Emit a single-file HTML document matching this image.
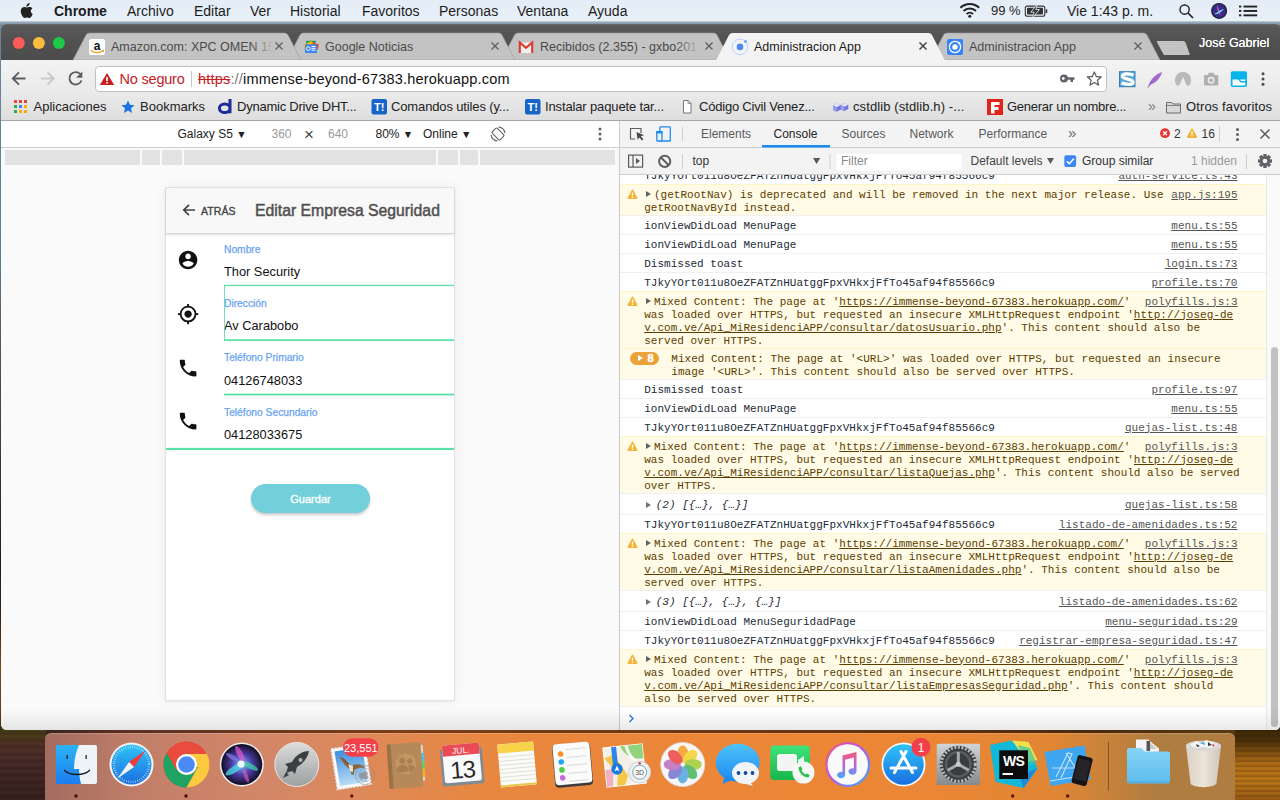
<!DOCTYPE html>
<html><head><meta charset="utf-8"><title>Administracion App</title>
<style>
*{box-sizing:border-box;margin:0;padding:0}
html,body{width:1280px;height:800px;overflow:hidden;background:#3a2418;font-family:"Liberation Sans",sans-serif;-webkit-font-smoothing:antialiased}
.abs{position:absolute}
#root{position:relative;width:1280px;height:800px;overflow:hidden}
/* desktop */
#desk{left:0;top:0;width:1280px;height:800px;background:linear-gradient(90deg,#3a2a20 0,#38241f 46px,#5a3020 120px,#7a3e18 400px,#6a3410 800px,#4a2a0c 1100px,#5a3a10 1235px,#6a4210 1250px,#8a5212 1265px,#5a3a0e 1280px)}
/* menubar */
#menubar{left:0;top:0;width:1280px;height:22px;background:linear-gradient(#e4edf7,#e8f0f8);border-bottom:1px solid #b9c3cc;font-size:14px;color:#1c1c1c;line-height:22px}
#menubar span{position:absolute;top:0;white-space:nowrap}
/* chrome window */
#win{left:1px;top:24px;width:1279px;height:705.500px;background:#fff;border-radius:5px 4px 5px 6px;overflow:hidden}
#winin{left:-1px;top:-24px;width:1280px;height:800px}
#titlebar{left:0;top:24px;width:1280px;height:36px;background:linear-gradient(#6a6a6a,#595959 2px,#535353 12px,#4c4c4c)}
#titlebar span{position:absolute;white-space:nowrap;font-size:12.5px;line-height:16px;top:15px;color:#4a4a4a}
#toolbar{left:0;top:60px;width:1280px;height:35px;background:linear-gradient(#f3f3f3,#e9e9e9)}
#bmbar{left:0;top:95px;width:1280px;height:25px;background:linear-gradient(#e9e9e9,#dedede);font-size:13px;color:#222}
#bmbar span{position:absolute;top:4px;white-space:nowrap;line-height:16px}

/* left pane */
#left{left:0;top:120px;width:619px;height:610px;background:#fafafa}
#devbar{left:0;top:0;width:619px;height:28px;background:#fff;border-bottom:1px solid #cfcfcf;font-size:12px;color:#222}
#devbar span{position:absolute;top:7px;line-height:15px;white-space:nowrap}
#mq i{position:absolute;top:30px;height:15px;background:#e3e3e3}
#phone{left:166px;top:68px;width:288px;height:512px;background:#fff;box-shadow:0 0 0 1px #e2e2e2,0 1px 3px rgba(0,0,0,.1),0 0 14px rgba(0,0,0,.06)}
#aphead{left:0;top:0;width:288px;height:46px;background:#f8f8f8;border-bottom:1px solid #d6d6d6;box-shadow:0 1px 2px rgba(0,0,0,.12)}
#phone .lb{position:absolute;left:58px;font-size:10.250px;line-height:12px;color:#6aa3f3;white-space:nowrap;-webkit-text-stroke:.25px #6aa3f3}
#phone .vl{position:absolute;left:58px;font-size:12.800px;line-height:16px;color:#111;white-space:nowrap}
#phone .gl{position:absolute;height:1.500px;background:#4fdc9c}
/* devtools */
#dt{left:619px;top:120px;width:661px;height:610px;background:#fff;border-left:1px solid #cbcbcb}
#dttabs{left:0;top:0;width:660px;height:28px;background:#f3f3f3;border-bottom:1px solid #cdcdcd;font-size:12px;color:#5a5a5a}
#dttabs span,#ctb span{position:absolute;top:6.500px;line-height:15px;white-space:nowrap}
#ctb{left:0;top:28px;width:660px;height:27px;z-index:2;background:#f3f3f3;border-bottom:1px solid #cdcdcd;font-size:12px;color:#333}
#cons{left:0;top:54px;width:646px;height:554px;overflow:hidden;font-family:"Liberation Mono",monospace;font-size:11px;line-height:13px;color:#222a35;letter-spacing:.016px}
#cons .r{position:absolute;left:0;width:646px;border-top:1px solid #f0f0f0;white-space:pre}
#cons .w{background:#fffbe6;border-top:1px solid #fff5c4;color:#5c3c00}
#cons .t{position:absolute;left:24px;top:2px}
#cons .k{position:absolute;right:28.500px;top:2px;text-decoration:underline;color:#545454}
#cons u{text-decoration:underline}
#cons .ar{display:inline-block;width:0;height:0;border-left:5.200px solid #636363;border-top:3.500px solid transparent;border-bottom:3.500px solid transparent;margin:2.500px 3.300px 0 1.500px;vertical-align:top}
</style></head><body><div id="root">
<div id="desk" class="abs"></div>
<div class="abs" style="left:0;top:726px;width:46px;height:74px;background:repeating-linear-gradient(180deg,rgba(0,0,0,.22) 0,rgba(0,0,0,0) 3px,rgba(0,0,0,.15) 7px),linear-gradient(180deg,#4a4216 0,#4e3a1c 10px,#52302a 22px,#432826 45px,#38221f 74px)"></div>
<div class="abs" style="left:1235px;top:726px;width:45px;height:74px;background:repeating-linear-gradient(180deg,rgba(40,20,0,.35) 0,rgba(0,0,0,0) 2px,rgba(40,20,0,.25) 5px),linear-gradient(180deg,#3a2808 0,#4a300a 14px,#7a4c10 24px,#b87418 38px,#c47c1a 55px,#9c5e14 74px)"></div>
<div class="abs" style="left:0;top:22px;width:2px;height:710px;background:linear-gradient(180deg,#6f8599 0,#5f7f95 230px,#555a68 310px,#3e3840 430px,#2a1c14 540px,#3a2414 600px,#7a4a18 645px,#6a4216 680px,#3a3010 710px)"></div>
<div id="menubar" class="abs">
<svg class="abs" style="left:20px;top:3px" width="14" height="16" viewBox="0 0 14 16"><path fill="#222" d="M9.6 0c.1 1-.3 1.900-.9 2.600-.6.700-1.500 1.200-2.400 1.100-.1-.9.400-1.900.9-2.500C7.800.5 8.800.1 9.600 0zM12.400 5.400c-1 .6-1.600 1.500-1.600 2.700 0 1.300.8 2.400 1.900 2.800-.3.900-.7 1.700-1.300 2.500-.6.800-1.200 1.600-2.100 1.600-.9 0-1.200-.6-2.300-.6s-1.400.6-2.300.6c-.9 0-1.600-.8-2.200-1.700C1.200 11.500.4 9 .9 7c.4-1.700 1.800-3 3.400-3 .9 0 1.800.6 2.400.6.600 0 1.600-.7 2.800-.6 1.100 0 2.200.5 2.900 1.400z"/></svg>
<span style="left:54px;font-weight:bold">Chrome</span>
<span style="left:127px">Archivo</span>
<span style="left:194px">Editar</span>
<span style="left:250px">Ver</span>
<span style="left:290px">Historial</span>
<span style="left:362px">Favoritos</span>
<span style="left:439px">Personas</span>
<span style="left:517px">Ventana</span>
<span style="left:588px">Ayuda</span>
<svg class="abs" style="left:950px;top:0" width="330" height="22" viewBox="950 0 330 22">
<g fill="none" stroke="#222" stroke-width="2.100" stroke-linecap="butt"><path d="M960.400 7.800a13.500 13.500 0 0 1 18.800 0"/><path d="M963.600 11a9 9 0 0 1 12.400 0"/><path d="M966.600 14a4.700 4.700 0 0 1 6.400 0"/></g><circle cx="969.800" cy="16.300" r="1.500" fill="#222"/>
<rect x="1025.300" y="6.100" width="19.500" height="10.200" rx="2" fill="none" stroke="#333" stroke-width="1.100"/><rect x="1045.700" y="9.200" width="1.600" height="4" rx=".8" fill="#333"/><rect x="1027" y="7.800" width="16" height="6.800" rx=".8" fill="#333"/><path d="M1036.800 5.500l-5.300 6.300h3.200l-1.700 4.700 5.600-6.500h-3.300z" fill="#e7eef5" stroke="#e7eef5" stroke-width="1.400"/><path d="M1036.800 5.500l-5.300 6.300h3.200l-1.700 4.700 5.600-6.500h-3.300z" fill="#333"/>
<circle cx="1184.600" cy="9.600" r="4.600" fill="none" stroke="#222" stroke-width="1.400"/><path d="M1188 13l5 5" stroke="#222" stroke-width="1.700"/>
<circle cx="1219.100" cy="10.900" r="8" fill="#1a1a2a"/><circle cx="1219.100" cy="10.900" r="6.800" fill="#3a2a8a"/><path d="M1214 14c3-1 7-5 10-5-2 2-5 6-10 5z" fill="#5ee0e8"/><path d="M1217 5c1.500 3 3 8 3.500 11-2-3-3.500-7-3.500-11z" fill="#f070c0"/>
<g fill="#222"><rect x="1243.500" y="5.600" width="13.700" height="1.900"/><rect x="1243.500" y="10" width="13.700" height="1.900"/><rect x="1243.500" y="14.400" width="13.700" height="1.900"/><rect x="1239" y="5.600" width="2.300" height="1.900"/><rect x="1239" y="10" width="2.300" height="1.900"/><rect x="1239" y="14.400" width="2.300" height="1.900"/></g>
</svg>
<span style="left:991px;font-size:13px">99 %</span>
<span style="left:1067px">Vie 1:43 p. m.</span>
</div>
<div class="abs" style="left:0;top:22px;width:1280px;height:3px;background:linear-gradient(#9fb0bf,#6f8599)"></div>
<div id="win" class="abs"><div id="winin" class="abs">
<div id="titlebar" class="abs">
<svg class="abs" style="left:0;top:0" width="1280" height="36" viewBox="0 24 1280 36">
<circle cx="18.800" cy="43" r="6" fill="#fc5b57"/><circle cx="38.900" cy="43" r="6" fill="#fdbc40"/><circle cx="58.900" cy="43" r="6" fill="#1dc84a"/>
<g fill="#c3c3c3" stroke="#9b9b9b" stroke-width="0.600">
<path d="M930.500 60 L943.500 35 Q944.500 33 947 33 L1143.500 33 Q1146 33 1147 35 L1160 60Z"/>
<path d="M501.500 60 L514.500 35 Q515.500 33 518 33 L713.500 33 Q716 33 717 35 L730 60Z"/>
<path d="M287 60 L300 35 Q301 33 303.500 33 L498.500 33 Q501 33 502 35 L515 60Z"/>
<path d="M73 60 L86 35 Q87 33 89.500 33 L284.500 33 Q287 33 288 35 L301 60Z"/>
<path d="M1157.500 41 L1183.500 41 Q1185 41 1185.500 42.500 L1189.500 53.500 Q1190 55 1188.500 55 L1165 55 Q1163.500 55 1163 53.500 L1157 42.200 Q1156.500 41 1157.500 41Z" stroke="none"/>
</g>
<path d="M716 60.500 L729 35 Q730 33 732.500 33 L928.500 33 Q931 33 932 35 L945 60.500Z" fill="#f3f3f3"/>
<g stroke="#5f5f5f" stroke-width="1.300" fill="none">
<path d="M275.500 42.500l7 7m0-7l-7 7"/><path d="M491.500 42.500l7 7m0-7l-7 7"/><path d="M705.500 42.500l7 7m0-7l-7 7"/><path d="M1134.500 42.500l7 7m0-7l-7 7"/>
</g>
<path d="M919.500 42.500l7 7m0-7l-7 7" stroke="#3c3c3c" stroke-width="1.400" fill="none"/>
<!-- favicons -->
<rect x="89" y="39" width="16" height="16" rx="2.500" fill="#fff"/><text x="97" y="49.500" font-family="Liberation Sans" font-weight="bold" font-size="12" text-anchor="middle" fill="#111">a</text><path d="M90.500 50.500c4 2.600 9 2.600 13 0" fill="none" stroke="#f5a01a" stroke-width="1.300"/><path d="M103.800 49.300l.3 2.700-2.300-.6z" fill="#f5a01a"/>
<rect x="306" y="40.800" width="10" height="3" rx=".8" fill="#1ea35a"/><path d="M303.600 44.500l3-1 4.500-2.500 4.500 2.500 3.200 .7-.7 5h-13.800z" fill="#fbbc05"/><path d="M311 41l4.500 2.500 3.300.7-.8 5-2-.5z" fill="#ea4335"/><rect x="305" y="44.200" width="12" height="8.800" rx=".8" fill="#3b82f4"/><circle cx="308.300" cy="48.600" r="1.900" fill="none" stroke="#fff" stroke-width="1"/><rect x="311.500" y="46" width="4" height="1" fill="#fff"/><rect x="311.500" y="47.800" width="4" height="1" fill="#fff"/><rect x="311.500" y="49.700" width="4" height="1" fill="#fff"/>
<rect x="519.800" y="42.500" width="12.400" height="10.500" fill="#f2f0ee"/><path d="M519.800 53V42.500l6.200 5.300 6.200-5.300V53" fill="none" stroke="#df3b2c" stroke-width="2.100"/>
<circle cx="740" cy="46.900" r="7.800" fill="none" stroke="#b4ccfa" stroke-width=".9"/><circle cx="740" cy="46.900" r="3.300" fill="#4a8af4"/><circle cx="745.500" cy="41.400" r="1.500" fill="#6aa8f8"/>
<rect x="947" y="39" width="16" height="16" rx="2.200" fill="#3585f8"/><circle cx="955" cy="47" r="5.600" fill="none" stroke="#fff" stroke-width="1.300"/><circle cx="955" cy="47" r="2.700" fill="#fff"/><circle cx="959.200" cy="43.200" r="1.100" fill="#fff"/>
</svg>
<span style="left:111px;width:163px;overflow:hidden">Amazon.com: XPC OMEN 15</span>
<i class="abs" style="left:250px;top:12px;width:24px;height:22px;background:linear-gradient(90deg,rgba(195,195,195,0),#c3c3c3)"></i>
<span style="left:325px">Google Noticias</span>
<span style="left:540px;width:157px;overflow:hidden">Recibidos (2.355) - gxbo201</span>
<i class="abs" style="left:675px;top:12px;width:25px;height:22px;background:linear-gradient(90deg,rgba(195,195,195,0),#c3c3c3)"></i>
<span style="left:754px;color:#1a1a1a">Administracion App</span>
<span style="left:969px">Administracion App</span>
<span style="left:1199px;color:#fff;top:11px;font-size:12.5px;text-shadow:0 0 .5px #fff">José Gabriel</span>
</div>
<div id="toolbar" class="abs">
<svg class="abs" style="left:0;top:0" width="1280" height="35" viewBox="0 60 1280 35">
<g fill="none" stroke="#5a5d61" stroke-width="1.900" stroke-linecap="butt" stroke-linejoin="miter">
<path d="M25.500 78.500H13.200M19 72.300l-6.200 6.200 6.200 6.200"/>
<path d="M41 78.500h12.300M47.500 72.300l6.200 6.200-6.200 6.200" stroke="#c9c9c9"/>
<path d="M80.300 74.200A6.200 6.200 0 1 0 81.500 80.500"/>
</g>
<path d="M82.300 71.500v6.200h-6.200z" fill="#5a5d61"/>
<rect x="95.500" y="66.500" width="1011" height="25" rx="3.500" fill="#fff" stroke="#bfbfbf"/>
<path d="M107 73l7.200 12h-14.400z" fill="#c5221f"/><rect x="106.200" y="77" width="1.600" height="4" fill="#fff"/><rect x="106.200" y="82" width="1.600" height="1.600" fill="#fff"/>
<rect x="191" y="71" width="1" height="16" fill="#c8c8c8"/>
<!-- key -->
<g fill="#5f6368"><circle cx="1064" cy="78.500" r="4"/><rect x="1066" y="77.300" width="8.500" height="2.400"/><rect x="1070.500" y="78" width="2.500" height="4"/></g><circle cx="1063.300" cy="78.500" r="1.400" fill="#fff"/>
<!-- star -->
<path d="M1094.300 72l2 4.500 4.900.5-3.700 3.300 1.100 4.800-4.300-2.600-4.300 2.600 1.100-4.800-3.700-3.300 4.900-.5z" fill="none" stroke="#5f6368" stroke-width="1.300" stroke-linejoin="round"/>
<!-- ext icons -->
<rect x="1119.500" y="71.700" width="15.500" height="15" fill="#58a6d6" stroke="#2f80b6" stroke-width="1"/><path d="M1133.500 75.300c-3.500-2-11-2-11 .9 0 3.300 10.600 2.500 10.600 6 0 3-8 2.600-11.600 .6" fill="none" stroke="#fff" stroke-width="3.300"/>
<path d="M1148.500 86.500c1-5 5-11.500 13.500-14.500-1.500 6-6 11-11.500 12.500z" fill="#a46ad0"/><path d="M1148 87.500l4-6" stroke="#8a4fc0" stroke-width="1"/>
<path d="M1176.600 85.600C1173 80 1175.500 72 1183 72s10 8 6.400 13.600l-2.700-.1L1183 76.800l-3.700 8.700z" fill="#b9b9b9"/>
<g fill="#b0b0b0"><rect x="1204" y="75" width="14.300" height="10.500" rx="1.200"/><rect x="1208.200" y="72.800" width="6" height="3" rx="1"/></g><circle cx="1211.100" cy="80.200" r="3.400" fill="#efefef"/><circle cx="1211.100" cy="80.200" r="1.900" fill="#b0b0b0"/>
<rect x="1230.800" y="71.300" width="16.200" height="15.800" rx="1.800" fill="#08b4ea"/><path d="M1232.500 79.500h5.300c1.500 0 1.500 3 3.200 3h4.300v3h-12.800zM1240 79.500h5.300v1.600H1241z" fill="#fff"/>
<g fill="#4a4a4a"><circle cx="1263" cy="73.800" r="1.500"/><circle cx="1263" cy="79" r="1.500"/><circle cx="1263" cy="84.200" r="1.500"/></g>
</svg>
<span class="abs" style="left:119.500px;top:10.500px;font-size:14.500px;line-height:17px;color:#c5221f;white-space:nowrap;letter-spacing:-.2px">No seguro</span>
<span class="abs" style="left:198px;top:10.500px;font-size:14.500px;line-height:17px;color:#111;white-space:nowrap;letter-spacing:.185px"><span style="color:#c5221f;text-decoration:line-through">https</span><span style="color:#777">://</span>immense-beyond-67383.herokuapp.com</span>
</div>
<div id="bmbar" class="abs">
<svg class="abs" style="left:0;top:0" width="1280" height="24" viewBox="0 95 1280 24">
<g><rect x="14" y="100" width="3" height="3" fill="#e8453c"/><rect x="19" y="100" width="3" height="3" fill="#e8453c"/><rect x="24" y="100" width="3" height="3" fill="#e8453c"/>
<rect x="14" y="105" width="3" height="3" fill="#34a853"/><rect x="19" y="105" width="3" height="3" fill="#4285f4"/><rect x="24" y="105" width="3" height="3" fill="#f9ab00"/>
<rect x="14" y="110" width="3" height="3" fill="#34a853"/><rect x="19" y="110" width="3" height="3" fill="#f9ab00"/><rect x="24" y="110" width="3" height="3" fill="#f9ab00"/></g>
<path d="M128 100.500l1.900 4.300 4.600.4-3.500 3.100 1.100 4.600-4.100-2.500-4.100 2.500 1.100-4.600-3.500-3.100 4.600-.4z" fill="#1a73e8"/>
<path d="M230 99v14.300M230 108.300a5.300 4.300 0 1 1-10.600 0a5.300 4.300 0 1 1 10.600 0z" fill="none" stroke="#1e2a9a" stroke-width="3"/>
<rect x="371.500" y="99" width="15.500" height="15.500" rx="2" fill="#1565c8"/><text x="379.200" y="111" font-family="Liberation Sans" font-weight="bold" font-size="11" fill="#fff" text-anchor="middle">T!</text>
<rect x="525" y="99" width="15.500" height="15.500" rx="2" fill="#1565c8"/><text x="532.700" y="111" font-family="Liberation Sans" font-weight="bold" font-size="11" fill="#fff" text-anchor="middle">T!</text>
<path d="M683.500 100.500h4.500l3 3v9.500h-7.500z" fill="#fff" stroke="#777" stroke-width="1"/><path d="M688 100.500v3h3" fill="none" stroke="#777" stroke-width=".8"/>
<g><path d="M833 105.500l4-2 3.500 1.500 4-2 3.800 1.700v4.300l-4 2-3.600-1.500-4 2.200-3.700-1.800z" fill="#7474dc"/><path d="M833 105.500l4-2 3.500 1.500 4-2 3.800 1.700-4 2-3.600-1.600-4 2.100z" fill="#e6e6fb"/><path d="M836.700 107.300v4.400l-3.700-1.800v-4.400zM844.300 106.700v4.300l-3.600-1.500v-4.400z" fill="#9c9cec"/></g>
<rect x="987" y="99" width="16" height="16" fill="#e2231a"/><path d="M991 102h8.500v3H994.500v2h4v3h-4v3.500H991z" fill="#fff"/>
<path d="M1166.500 102.500h5l1.500 1.500h7.500v9h-14z" fill="#d8d8d8" stroke="#6b6b6b" stroke-width="1"/><path d="M1166.500 105.500h14" stroke="#6b6b6b" stroke-width=".8"/>
</svg>
<span style="left:33.500px">Aplicaciones</span>
<span style="left:140px">Bookmarks</span>
<span style="left:237px;letter-spacing:-0.240px">Dynamic Drive DHT...</span>
<span style="left:391px;letter-spacing:-0.138px">Comandos utiles (y...</span>
<span style="left:545px;letter-spacing:-0.135px">Instalar paquete tar...</span>
<span style="left:699px;letter-spacing:-0.205px">Código Civil Venez...</span>
<span style="left:853px;letter-spacing:0.100px">cstdlib (stdlib.h) -...</span>
<span style="left:1007px;letter-spacing:-0.255px">Generar un nombre...</span>
<span style="left:1148px;color:#777;font-size:14px;top:3px">»</span>
<span style="left:1186px;letter-spacing:0.113px">Otros favoritos</span>
</div>
<div class="abs" style="left:0;top:120px;width:1280px;height:1px;background:#a6a6a6;z-index:3"></div>
<div id="left" class="abs">
<div id="devbar" class="abs">
<span style="left:177.500px">Galaxy S5 <b style="font-size:10.500px;font-weight:normal">▼</b></span>
<span style="left:271.500px;color:#9a9a9a">360</span>
<span style="left:304px;color:#444;font-size:17px;top:6.500px">×</span>
<span style="left:328px;color:#9a9a9a">640</span>
<span style="left:375.500px">80% <b style="font-size:10.500px;font-weight:normal">▼</b></span>
<span style="left:423px">Online <b style="font-size:10.500px;font-weight:normal">▼</b></span>
<svg class="abs" style="left:488px;top:4px" width="20" height="20" viewBox="-10 -10 20 20"><g fill="none" stroke="#666" stroke-width="1.150"><rect x="-5.600" y="-3.500" width="11.200" height="7" rx="1.200" transform="rotate(45)"/><path d="M.6 -6.900A7 7 0 0 1 6.900 -.9M-.6 6.900A7 7 0 0 1 -6.900 .9"/></g></svg>
<svg class="abs" style="left:598px;top:6px" width="4" height="16" viewBox="0 0 4 16"><g fill="#5f6368"><circle cx="2" cy="3" r="1.500"/><circle cx="2" cy="8" r="1.500"/><circle cx="2" cy="13" r="1.500"/></g></svg>
</div>
<div id="mq"><i style="left:5px;width:135px"></i><i style="left:142px;width:17.500px"></i><i style="left:161.500px;width:20.500px"></i><i style="left:184px;width:252px"></i><i style="left:438px;width:20px"></i><i style="left:459.500px;width:18.500px"></i><i style="left:480px;width:135px"></i></div>
<div id="phone" class="abs">
<div id="aphead" class="abs">
<svg class="abs" style="left:16px;top:15px" width="14" height="14" viewBox="0 0 14 14"><path d="M13 7H2.500M7 1.800L1.800 7 7 12.200" fill="none" stroke="#424242" stroke-width="1.700"/></svg>
<span class="abs" style="left:35px;top:16.500px;font-size:10.500px;line-height:13px;color:#424242;letter-spacing:.1px;-webkit-text-stroke:.35px #424242">ATRÁS</span>
<span class="abs" style="left:89px;top:13px;font-size:15.770px;line-height:20px;color:#505050;white-space:nowrap;-webkit-text-stroke:.45px #505050">Editar Empresa Seguridad</span>
</div>
<!-- icons -->
<svg class="abs" style="left:10.900px;top:60.9px" width="22.200" height="22.200" viewBox="0 0 24 24"><path fill="#111" d="M12 2C6.480 2 2 6.480 2 12s4.480 10 10 10 10-4.480 10-10S17.520 2 12 2zm0 3c1.660 0 3 1.340 3 3s-1.340 3-3 3-3-1.340-3-3 1.340-3 3-3zm0 14.200c-2.500 0-4.710-1.280-6-3.220.030-1.990 4-3.080 6-3.080 1.990 0 5.970 1.090 6 3.080-1.290 1.940-3.500 3.220-6 3.220z"/></svg>
<svg class="abs" style="left:10.900px;top:114.9px" width="22.200" height="22.200" viewBox="0 0 24 24"><path fill="#111" d="M12 8c-2.210 0-4 1.790-4 4s1.790 4 4 4 4-1.790 4-4-1.790-4-4-4zm8.940 3A8.994 8.994 0 0 0 13 3.060V1h-2v2.060A8.994 8.994 0 0 0 3.060 11H1v2h2.060A8.994 8.994 0 0 0 11 20.940V23h2v-2.060A8.994 8.994 0 0 0 20.940 13H23v-2h-2.060zM12 19c-3.870 0-7-3.130-7-7s3.130-7 7-7 7 3.130 7 7-3.130 7-7 7z"/></svg>
<svg class="abs" style="left:10.900px;top:168.9px" width="22.200" height="22.200" viewBox="0 0 24 24"><path fill="#111" d="M6.620 10.790c1.440 2.830 3.760 5.140 6.590 6.590l2.200-2.200c.27-.27.670-.36 1.020-.24 1.120.37 2.330.57 3.570.57.550 0 1 .45 1 1V20c0 .55-.45 1-1 1-9.390 0-17-7.610-17-17 0-.55.450-1 1-1h3.500c.55 0 1 .45 1 1 0 1.250.2 2.450.57 3.570.11.350.03.740-.25 1.020l-2.200 2.200z"/></svg>
<svg class="abs" style="left:10.900px;top:221.9px" width="22.200" height="22.200" viewBox="0 0 24 24"><path fill="#111" d="M6.620 10.790c1.440 2.830 3.760 5.140 6.590 6.590l2.200-2.200c.27-.27.670-.36 1.020-.24 1.120.37 2.330.57 3.570.57.550 0 1 .45 1 1V20c0 .55-.45 1-1 1-9.390 0-17-7.610-17-17 0-.55.450-1 1-1h3.500c.55 0 1 .45 1 1 0 1.250.2 2.450.57 3.570.11.350.03.740-.25 1.020l-2.200 2.200z"/></svg>
<span class="lb" style="top:55.500px">Nombre</span><span class="vl" style="top:75.500px">Thor Security</span><i class="gl" style="left:58px;width:230px;top:96px;height:3px;background:linear-gradient(180deg,rgba(79,222,158,0.25) 0px,rgba(79,222,158,0.25) 1px,rgba(79,222,158,0.85) 1px,rgba(79,222,158,0.85) 2px,rgba(79,222,158,0.12) 2px,rgba(79,222,158,0.12) 3px)"></i>
<span class="lb" style="top:110px">Dirección</span><span class="vl" style="top:130px">Av Carabobo</span><i class="gl" style="left:58px;width:230px;top:151px;height:3px;background:linear-gradient(180deg,rgba(79,222,158,0.70) 0px,rgba(79,222,158,0.70) 1px,rgba(79,222,158,0.90) 1px,rgba(79,222,158,0.90) 2px,rgba(79,222,158,0.06) 2px,rgba(79,222,158,0.06) 3px)"></i><i class="gl" style="left:57.800px;width:1px;top:97px;height:55px;opacity:.8"></i>
<span class="lb" style="top:164px">Teléfono Primario</span><span class="vl" style="top:184.500px">04126748033</span><i class="gl" style="left:58px;width:230px;top:205px;height:3px;background:linear-gradient(180deg,rgba(79,222,158,0.30) 0px,rgba(79,222,158,0.30) 1px,rgba(79,222,158,1.00) 1px,rgba(79,222,158,1.00) 2px,rgba(79,222,158,0.40) 2px,rgba(79,222,158,0.40) 3px)"></i>
<span class="lb" style="top:218.500px">Teléfono Secundario</span><span class="vl" style="top:238.500px">04128033675</span><i class="gl" style="left:0;width:288px;top:259px;height:3px;background:linear-gradient(180deg,rgba(79,222,158,0.12) 0px,rgba(79,222,158,0.12) 1px,rgba(79,222,158,0.95) 1px,rgba(79,222,158,0.95) 2px,rgba(79,222,158,0.95) 2px,rgba(79,222,158,0.95) 3px)"></i>
<div class="abs" style="left:85px;top:296px;width:119px;height:29px;border-radius:15px;background:#72d0db;box-shadow:0 2px 3px rgba(0,0,0,.22);color:#fff;font-size:11px;line-height:31px;text-align:center;-webkit-text-stroke:.35px #fff">Guardar</div>
</div>
</div>
<div id="dt" class="abs">
<div id="dttabs" class="abs">
<svg class="abs" style="left:0;top:0" width="660" height="28" viewBox="620 120 660 28">
<g fill="none" stroke="#5f5f5f" stroke-width="1.200"><path d="M641 133v-4.500h-10.500v10.500h4.500" /></g><path d="M636.500 132l7.500 3.200-3.200 1.100 2.600 3-1.500 1.200-2.500-3.100-1.800 2.400z" fill="#4a4a4a"/>
<g fill="#f3f3f3" stroke="#1a8cf0" stroke-width="1.300"><rect x="659.900" y="126.900" width="10.400" height="14.100" rx=".8"/><rect x="656.800" y="131.700" width="5.200" height="9.300" rx=".8"/></g><rect x="656.200" y="131.100" width="6.400" height="2.400" fill="#1a8cf0"/>
<rect x="682" y="127" width="1" height="14" fill="#cfcfcf"/>
<rect x="762" y="145" width="68" height="2.500" fill="#1a8cf0"/>
<circle cx="1165" cy="133.200" r="4.900" fill="#e8332c"/><path d="M1163 131.200l4 4m0-4l-4 4" stroke="#fff" stroke-width="1.300"/>
<path d="M1192 129.200l4.300 8h-8.600z" fill="#f2b53a" stroke="#f2b53a" stroke-width="1.600" stroke-linejoin="round"/><rect x="1191.400" y="131.200" width="1.200" height="3.500" fill="#fff"/><rect x="1191.400" y="135.400" width="1.200" height="1.200" fill="#fff"/>
<rect x="1219" y="126" width="1" height="16" fill="#cfcfcf"/>
<g fill="#5f6368"><circle cx="1237.500" cy="129.500" r="1.500"/><circle cx="1237.500" cy="134.500" r="1.500"/><circle cx="1237.500" cy="139.500" r="1.500"/></g>
<path d="M1260.500 129.500l9 9m0-9l-9 9" stroke="#5a5a5a" stroke-width="1.500" fill="none"/>
</svg>
<span style="left:81px">Elements</span>
<span style="left:153.500px;color:#222">Console</span>
<span style="left:221.500px">Sources</span>
<span style="left:289.500px">Network</span>
<span style="left:358.500px">Performance</span>
<span style="left:448px;font-size:15px;top:4.500px;color:#666">»</span>
<span style="left:554px;color:#333">2</span>
<span style="left:581.500px;color:#333">16</span>
</div>
<div id="ctb" class="abs">
<svg class="abs" style="left:0;top:0" width="660" height="26" viewBox="620 148 660 26">
<g fill="none" stroke="#5a5a5a" stroke-width="1.200"><rect x="628.600" y="155.100" width="14" height="12" /><path d="M633 155v12"/></g><path d="M636 158l4 3-4 3z" fill="#5a5a5a"/>
<circle cx="664.700" cy="161.300" r="5.600" fill="none" stroke="#5e5e5e" stroke-width="2"/><path d="M660.700 157.300l8 8" stroke="#5e5e5e" stroke-width="2"/>
<rect x="682" y="154" width="1" height="15" fill="#cfcfcf"/>
<path d="M813 158h7.200l-3.600 6z" fill="#5a5a5a"/>
<rect x="829.500" y="154" width="1" height="15" fill="#cfcfcf"/>
<rect x="836.500" y="154" width="125" height="16.500" fill="#fff"/>
<path d="M1047 158h7l-3.500 6z" fill="#5a5a5a"/>
<rect x="1064.300" y="155.200" width="11.800" height="11.800" rx="2" fill="#3b86f2"/><path d="M1066.800 161.200l2.500 2.500 4.500-5" fill="none" stroke="#fff" stroke-width="1.600"/>
<rect x="1246" y="154" width="1" height="15" fill="#cfcfcf"/>
<g transform="translate(1265 161)"><g fill="#5f6368"><circle r="5"/><g id="tg"><rect x="-1.700" y="-7" width="3.400" height="14"/></g><rect x="-1.700" y="-7" width="3.400" height="14" transform="rotate(45)"/><rect x="-1.700" y="-7" width="3.400" height="14" transform="rotate(90)"/><rect x="-1.700" y="-7" width="3.400" height="14" transform="rotate(135)"/></g><circle r="2.300" fill="#f3f3f3"/></g>
</svg>
<span style="left:72.500px;top:5.500px">top</span>
<span style="left:221px;top:6px;color:#8a8a8a">Filter</span>
<span style="left:350.500px;top:5.500px;color:#444">Default levels</span>
<span style="left:462px;top:5.500px;color:#333">Group similar</span>
<span style="left:571px;top:5.500px;color:#9a9a9a">1 hidden</span>
</div>
<div id="cons" class="abs">
<div class="r" style="top:-9px;height:19px"><span class="t" style="left:24.200px;top:3.500px">TJkyYOrt011u8OeZFATZnHUatggFpxVHkxjFfTo45af94f85566c9</span><span class="k" style="top:3.500px">auth-service.ts:43</span></div>
<div class="r w" style="top:10px;height:31px"><svg class="abs" style="left:6.500px;top:4px" width="11" height="11" viewBox="0 0 11 11"><path d="M5.500 1.300L9.700 9.200H1.300z" fill="#f2b53a" stroke="#f2b53a" stroke-width="1.600" stroke-linejoin="round"/><rect x="4.800" y="3.400" width="1.400" height="3.400" rx=".5" fill="#fff"/><rect x="4.800" y="7.500" width="1.400" height="1.400" rx=".5" fill="#fff"/></svg><span class="t" style="left:24.200px;top:3.500px"><span class="ar"></span>(getRootNav) is deprecated and will be removed in the next major release. Use
getRootNavById instead.</span><span class="k" style="top:3.500px">app.js:195</span></div>
<div class="r" style="top:41px;height:19px"><span class="t" style="left:24.200px;top:3.500px">ionViewDidLoad MenuPage</span><span class="k" style="top:3.500px">menu.ts:55</span></div>
<div class="r" style="top:60px;height:19px"><span class="t" style="left:24.200px;top:3.500px">ionViewDidLoad MenuPage</span><span class="k" style="top:3.500px">menu.ts:55</span></div>
<div class="r" style="top:79px;height:19px"><span class="t" style="left:24.200px;top:3.500px">Dismissed toast</span><span class="k" style="top:3.500px">login.ts:73</span></div>
<div class="r" style="top:98px;height:19px"><span class="t" style="left:24.200px;top:3.500px">TJkyYOrt011u8OeZFATZnHUatggFpxVHkxjFfTo45af94f85566c9</span><span class="k" style="top:3.500px">profile.ts:70</span></div>
<div class="r w" style="top:117px;height:57px"><svg class="abs" style="left:6.500px;top:4px" width="11" height="11" viewBox="0 0 11 11"><path d="M5.500 1.300L9.700 9.200H1.300z" fill="#f2b53a" stroke="#f2b53a" stroke-width="1.600" stroke-linejoin="round"/><rect x="4.800" y="3.400" width="1.400" height="3.400" rx=".5" fill="#fff"/><rect x="4.800" y="7.500" width="1.400" height="1.400" rx=".5" fill="#fff"/></svg><span class="t" style="left:24.200px;top:3.500px"><span class="ar"></span>Mixed Content: The page at '<u>https://immense-beyond-67383.herokuapp.com/</u>'
was loaded over HTTPS, but requested an insecure XMLHttpRequest endpoint '<u>http://joseg-de</u>
<u>v.com.ve/Api_MiResidenciAPP/consultar/datosUsuario.php</u>'. This content should also be
served over HTTPS.</span><span class="k" style="top:3.500px">polyfills.js:3</span></div>
<div class="r w" style="top:174px;height:31px"><span class="abs" style="left:10px;top:2.500px;width:29px;height:13.500px;border-radius:7px;background:#eba23a;color:#fff;font:bold 11px/13.500px 'Liberation Sans',sans-serif"><i class="abs" style="left:8px;top:3.400px;width:0;height:0;border-left:5px solid #fff;border-top:3.300px solid transparent;border-bottom:3.300px solid transparent"></i><span class="abs" style="left:17.500px;top:0;-webkit-text-stroke:.4px #fff">8</span></span><span class="t" style="left:51.300px;top:3.500px">Mixed Content: The page at '&lt;URL&gt;' was loaded over HTTPS, but requested an insecure
image '&lt;URL&gt;'. This content should also be served over HTTPS.</span></div>
<div class="r" style="top:205px;height:19px"><span class="t" style="left:24.200px;top:3.500px">Dismissed toast</span><span class="k" style="top:3.500px">profile.ts:97</span></div>
<div class="r" style="top:224px;height:19px"><span class="t" style="left:24.200px;top:3.500px">ionViewDidLoad MenuPage</span><span class="k" style="top:3.500px">menu.ts:55</span></div>
<div class="r" style="top:243px;height:19px"><span class="t" style="left:24.200px;top:3.500px">TJkyYOrt011u8OeZFATZnHUatggFpxVHkxjFfTo45af94f85566c9</span><span class="k" style="top:3.500px">quejas-list.ts:48</span></div>
<div class="r w" style="top:262px;height:57px"><svg class="abs" style="left:6.500px;top:4px" width="11" height="11" viewBox="0 0 11 11"><path d="M5.500 1.300L9.700 9.200H1.300z" fill="#f2b53a" stroke="#f2b53a" stroke-width="1.600" stroke-linejoin="round"/><rect x="4.800" y="3.400" width="1.400" height="3.400" rx=".5" fill="#fff"/><rect x="4.800" y="7.500" width="1.400" height="1.400" rx=".5" fill="#fff"/></svg><span class="t" style="left:24.200px;top:3.500px"><span class="ar"></span>Mixed Content: The page at '<u>https://immense-beyond-67383.herokuapp.com/</u>'
was loaded over HTTPS, but requested an insecure XMLHttpRequest endpoint '<u>http://joseg-de</u>
<u>v.com.ve/Api_MiResidenciAPP/consultar/listaQuejas.php</u>'. This content should also be served
over HTTPS.</span><span class="k" style="top:3.500px">polyfills.js:3</span></div>
<div class="r" style="top:319px;height:21px"><span class="t" style="left:24.200px;top:5px"><span class="ar" style="margin-right:5px;border-left-color:#727272"></span><i>(2) [{…}, {…}]</i></span><span class="k" style="top:5px">quejas-list.ts:58</span></div>
<div class="r" style="top:340px;height:19px"><span class="t" style="left:24.200px;top:3.500px">TJkyYOrt011u8OeZFATZnHUatggFpxVHkxjFfTo45af94f85566c9</span><span class="k" style="top:3.500px">listado-de-amenidades.ts:52</span></div>
<div class="r w" style="top:359px;height:57px"><svg class="abs" style="left:6.500px;top:4px" width="11" height="11" viewBox="0 0 11 11"><path d="M5.500 1.300L9.700 9.200H1.300z" fill="#f2b53a" stroke="#f2b53a" stroke-width="1.600" stroke-linejoin="round"/><rect x="4.800" y="3.400" width="1.400" height="3.400" rx=".5" fill="#fff"/><rect x="4.800" y="7.500" width="1.400" height="1.400" rx=".5" fill="#fff"/></svg><span class="t" style="left:24.200px;top:3.500px"><span class="ar"></span>Mixed Content: The page at '<u>https://immense-beyond-67383.herokuapp.com/</u>'
was loaded over HTTPS, but requested an insecure XMLHttpRequest endpoint '<u>http://joseg-de</u>
<u>v.com.ve/Api_MiResidenciAPP/consultar/listaAmenidades.php</u>'. This content should also be
served over HTTPS.</span><span class="k" style="top:3.500px">polyfills.js:3</span></div>
<div class="r" style="top:416px;height:21px"><span class="t" style="left:24.200px;top:5px"><span class="ar" style="margin-right:5px;border-left-color:#727272"></span><i>(3) [{…}, {…}, {…}]</i></span><span class="k" style="top:5px">listado-de-amenidades.ts:62</span></div>
<div class="r" style="top:437px;height:19px"><span class="t" style="left:24.200px;top:3.500px">ionViewDidLoad MenuSeguridadPage</span><span class="k" style="top:3.500px">menu-seguridad.ts:29</span></div>
<div class="r" style="top:456px;height:19px"><span class="t" style="left:24.200px;top:3.500px">TJkyYOrt011u8OeZFATZnHUatggFpxVHkxjFfTo45af94f85566c9</span><span class="k" style="top:3.500px">registrar-empresa-seguridad.ts:47</span></div>
<div class="r w" style="top:475px;height:57px"><svg class="abs" style="left:6.500px;top:4px" width="11" height="11" viewBox="0 0 11 11"><path d="M5.500 1.300L9.700 9.200H1.300z" fill="#f2b53a" stroke="#f2b53a" stroke-width="1.600" stroke-linejoin="round"/><rect x="4.800" y="3.400" width="1.400" height="3.400" rx=".5" fill="#fff"/><rect x="4.800" y="7.500" width="1.400" height="1.400" rx=".5" fill="#fff"/></svg><span class="t" style="left:24.200px;top:3.500px"><span class="ar"></span>Mixed Content: The page at '<u>https://immense-beyond-67383.herokuapp.com/</u>'
was loaded over HTTPS, but requested an insecure XMLHttpRequest endpoint '<u>http://joseg-de</u>
<u>v.com.ve/Api_MiResidenciAPP/consultar/listaEmpresasSeguridad.php</u>'. This content should
also be served over HTTPS.</span><span class="k" style="top:3.500px">polyfills.js:3</span></div>
<div class="r" style="top:532px;height:24px"><svg class="abs" style="left:8px;top:6.500px" width="7" height="9" viewBox="0 0 7 9"><path d="M1.500 1l3.500 3.500L1.500 8" fill="none" stroke="#3a7be0" stroke-width="1.500"/></svg></div>
</div>
<div class="abs" style="left:646px;top:54px;width:14px;height:556px;background:#fafafa;border-left:1px solid #e8e8e8"><i class="abs" style="left:3.700px;top:173px;width:7.300px;height:380px;border-radius:4px;background:#c1c1c1"></i></div>
</div>
<div class="abs" style="left:0;top:708px;width:1280px;height:22px;background:linear-gradient(180deg,rgba(0,0,0,0),rgba(0,0,0,.025) 8px,rgba(0,0,0,.085));pointer-events:none"></div>
</div></div>
<div class="abs" style="left:45px;top:733px;width:1190px;height:70px;border-radius:6px 6px 0 0;background:linear-gradient(90deg,#a26c5f 0,#c07e69 90px,#d38768 220px,#df8957 330px,#e8873f 450px,#ec8638 650px,#ea8636 900px,#e08634 1010px,#c4823c 1070px,#b07d40 1110px,#af7d41 1190px);box-shadow:inset 0 1px 0 rgba(255,255,255,.18)"></div>
<svg class="abs" style="left:0;top:730px" width="1280" height="70" viewBox="0 730 1280 70">
<defs>
<linearGradient id="gF" x1="0" y1="0" x2="0" y2="1"><stop offset="0" stop-color="#2cb4f6"/><stop offset="1" stop-color="#1a7df0"/></linearGradient>
<linearGradient id="gS" x1="0" y1="0" x2="0" y2="1"><stop offset="0" stop-color="#2ec3f8"/><stop offset="1" stop-color="#1a6fe0"/></linearGradient>
<radialGradient id="gSi" cx=".5" cy=".5" r=".5"><stop offset="0" stop-color="#d8f4fa"/><stop offset=".22" stop-color="#6a8ae0"/><stop offset=".55" stop-color="#4a3aa0"/><stop offset=".85" stop-color="#2a2058"/><stop offset="1" stop-color="#15112c"/></radialGradient>
<linearGradient id="gL" x1="0" y1="0" x2="0" y2="1"><stop offset="0" stop-color="#dcdcdc"/><stop offset="1" stop-color="#9d9fa0"/></linearGradient>
<linearGradient id="gM" x1="0" y1="0" x2="0" y2="1"><stop offset="0" stop-color="#3f8fe0"/><stop offset="1" stop-color="#b8dcf6"/></linearGradient>
<linearGradient id="gMs" x1="0" y1="0" x2="0" y2="1"><stop offset="0" stop-color="#4fc3fa"/><stop offset="1" stop-color="#1b8af2"/></linearGradient>
<linearGradient id="gFt" x1="0" y1="0" x2="0" y2="1"><stop offset="0" stop-color="#3fe27a"/><stop offset="1" stop-color="#16b74c"/></linearGradient>
<linearGradient id="gIt" x1="0" y1="0" x2="1" y2="1"><stop offset="0" stop-color="#f6527e"/><stop offset=".5" stop-color="#b45ae8"/><stop offset="1" stop-color="#2bb6f4"/></linearGradient>
<linearGradient id="gNt" x1="0" y1="0" x2="0" y2="1"><stop offset="0" stop-color="#f85a76"/><stop offset=".55" stop-color="#b566e6"/><stop offset="1" stop-color="#3cb1f4"/></linearGradient>
<linearGradient id="gSp" x1="0" y1="0" x2="0" y2="1"><stop offset="0" stop-color="#cfd5d8"/><stop offset="1" stop-color="#858a8d"/></linearGradient>
<linearGradient id="gFo" x1="0" y1="0" x2="0" y2="1"><stop offset="0" stop-color="#86d4f7"/><stop offset="1" stop-color="#5dbcec"/></linearGradient>
<linearGradient id="gTr" x1="0" y1="0" x2="1" y2="0"><stop offset="0" stop-color="#e4e4e4"/><stop offset=".5" stop-color="#fbfbfb"/><stop offset="1" stop-color="#d6d6d6"/></linearGradient>
</defs>
<!-- Finder -->
<g><rect x="56" y="745" width="41" height="39" rx="2" fill="url(#gF)"/><path d="M79 745h16a2 2 0 0 1 2 2v35a2 2 0 0 1-2 2H81c-1.500-6-2-11-2-15h-5c0-9 2-17 5-24z" fill="#eef3f8"/><path d="M64 770c6 6 20 6 26 0" fill="none" stroke="#1a1a1a" stroke-width="1.300"/><rect x="66.500" y="755" width="1.300" height="4" rx=".6" fill="#1a1a1a"/><rect x="85.500" y="755" width="1.300" height="4" rx=".6" fill="#1a1a1a"/></g>
<!-- Safari -->
<g><circle cx="131.500" cy="764.500" r="22" fill="#f4f4f4"/><circle cx="131.500" cy="764.500" r="20" fill="url(#gS)"/><circle cx="131.500" cy="764.500" r="17.500" fill="none" stroke="#fff" stroke-width="2.500" stroke-dasharray=".6 1.700" opacity=".75"/><path d="M145.500 750.500l-11.500 16.500-5-5z" fill="#f03a3a"/><path d="M117.500 778.500l11.500-16.500 5 5z" fill="#f2f2f2"/></g>
<!-- Chrome -->
<g><circle cx="186.500" cy="764.500" r="23" fill="#e94b3c"/><path d="M186.500 764.500L166.600 753A23 23 0 0 0 186.500 787.500L198 767z" fill="#1ea362"/><path d="M186.500 764.500l11.500 2.500-11.500 20.500A23 23 0 0 0 206.400 753h-23z" fill="#fdc93f"/><path d="M186.500 741.500A23 23 0 0 0 166.600 753l10 17.200 10-16.200h19.800a23 23 0 0 0-19.900-12.500z" fill="#e94b3c"/><circle cx="186.500" cy="764.500" r="10.500" fill="#fff"/><circle cx="186.500" cy="764.500" r="8.300" fill="#4a8af4"/></g>
<!-- Siri -->
<g><circle cx="241.800" cy="764.500" r="22" fill="#f0f0f0"/><circle cx="241.800" cy="764.500" r="20.500" fill="#14112b"/><circle cx="241.800" cy="764.500" r="19.500" fill="url(#gSi)"/>
<ellipse cx="235" cy="769" rx="11" ry="3.200" fill="#48e0e6" opacity=".75" transform="rotate(-32 235 769)"/><ellipse cx="250" cy="766" rx="9" ry="2.600" fill="#3fd8a8" opacity=".7" transform="rotate(28 250 766)"/><ellipse cx="240" cy="754" rx="9" ry="2.800" fill="#e45ad0" opacity=".7" transform="rotate(62 240 754)"/><ellipse cx="246" cy="776" rx="7" ry="2" fill="#e060c8" opacity=".6" transform="rotate(70 246 776)"/><ellipse cx="232" cy="757" rx="7" ry="2.200" fill="#8a7af0" opacity=".7" transform="rotate(30 232 757)"/><circle cx="241" cy="764" r="3.500" fill="#fff" opacity=".9"/></g>
<!-- Launchpad -->
<g><circle cx="296.800" cy="764.500" r="22" fill="url(#gL)" stroke="#e8e8e8" stroke-width="1"/><path d="M309 751c-7 0-13 4-17 11l-7 2 3 3-2 6 6-2 3 3 2-7c7-4 11-10 12-16z" fill="#3d4043"/><circle cx="300.500" cy="760" r="2" fill="#b8b8b8"/><path d="M286 772l-3 6 6-3z" fill="#3d4043"/></g>
<!-- Mail -->
<g transform="rotate(-9 352 766)"><rect x="334" y="746" width="34" height="41" fill="#fafafa" stroke="#ececec" stroke-dasharray="2 1.500" stroke-width="1.500"/><rect x="337" y="749" width="28" height="35" fill="url(#gM)"/><path d="M341 755c3 1 6 4 8 8l3 2 4 0c4 0 7 2 9 5-4-1-8-1-11 0l-2 5-2-1 0-5c-4-3-7-8-9-14z" fill="#8a6640"/><path d="M348.500 763.500l4.500 2.500-1 6-2.500-1z" fill="#efe4d0"/><path d="M344 757c2 2 4 5 5 7" stroke="#5a4028" stroke-width=".8" fill="none"/></g>
<circle cx="365" cy="775" r="9.500" fill="none" stroke="#8a8480" stroke-width=".8" opacity=".75"/><circle cx="365" cy="775" r="6.500" fill="none" stroke="#8a8480" stroke-width=".7" opacity=".65"/><path d="M365 771.500c.8-1.200 2-1 2-1s0 1.200-.8 1.800c1.500 0 2.300 1 2.300 1-1.500 1-1.200 3 .2 3.600-.5 1.300-1.500 2.600-2.500 2.600s-1.200-.5-2.200-.5-1.300.5-2.200.5c-1.200 0-3-2.800-2.500-5 .5-2 2.300-2.600 3.300-2.300.8.200 1.500.4 2.400-.7z" fill="#8a8480" opacity=".7"/>
<rect x="343" y="738.300" width="35.500" height="18.400" rx="9.200" fill="#f2404a"/><text x="360.800" y="751.500" font-family="Liberation Sans" font-size="11" fill="#fff" text-anchor="middle">23,551</text>
<!-- Contacts -->
<g transform="rotate(-4 406 765)"><rect x="420" y="746" width="4" height="36" rx="1" fill="#d8d8d8"/><rect x="420" y="754" width="4.500" height="8" fill="#4cc0e8"/><rect x="420" y="762" width="4.500" height="8" fill="#5cd068"/><rect x="420" y="770" width="4.500" height="8" fill="#f0b030"/><rect x="388" y="743" width="34" height="45" rx="2.500" fill="#b88958"/><rect x="388" y="743" width="4" height="45" rx="2" fill="#9c7245"/><circle cx="406" cy="764" r="10.500" fill="#c39664"/><circle cx="402.500" cy="760.500" r="3" fill="#ad7f50"/><circle cx="410" cy="761.500" r="2.700" fill="#ad7f50"/><path d="M396.500 770c.5-4.500 4-5.500 6-5.500s5.500 1 6 5.500c-3 3-9 3-12 0zM408 765.500c2-1 6-.5 7 3.500-1.500 2.500-4 3.500-6 3.500 0-3 0-5-1-7z" fill="#ad7f50"/></g>
<!-- Calendar -->
<g transform="rotate(-5 462 764)"><rect x="441" y="748" width="42" height="37" rx="2" fill="#7f8a94"/><rect x="443.500" y="744" width="37" height="38" rx="2.500" fill="#fafafa"/><path d="M443.500 746.500a2.500 2.500 0 0 1 2.500-2.500h32a2.500 2.500 0 0 1 2.500 2.500V755h-37z" fill="#ea4a56"/><text x="462" y="753.300" font-family="Liberation Sans" font-size="8.500" fill="#fff" text-anchor="middle">JUL.</text><text x="462" y="778" font-family="Liberation Sans" font-size="24" fill="#2a2a2a" text-anchor="middle" letter-spacing="-1">13</text></g>
<!-- Notes -->
<g transform="rotate(-5 517 764)"><rect x="499" y="743" width="36" height="43" rx="1" fill="#fbfbf8"/><rect x="499" y="743" width="36" height="9" fill="#f9d24c"/><g stroke="#d9d9d4" stroke-width=".8"><path d="M499 756h36M499 760h36M499 764h36M499 768h36M499 772h36M499 776h36M499 780h36"/></g><rect x="499" y="784" width="36" height="2" fill="#e8c84a"/></g>
<!-- Reminders -->
<g transform="rotate(-5 572 764)"><rect x="553.500" y="743.500" width="38" height="43" rx="4" fill="#3a3a3c"/><rect x="554" y="743" width="37" height="41" rx="4" fill="#fbfbfb"/><circle cx="561.500" cy="753" r="2.800" fill="#f5922a"/><circle cx="561.500" cy="761" r="2.800" fill="#1aa8f0"/><circle cx="561.500" cy="769" r="2.800" fill="#4cd04a"/><circle cx="561.500" cy="777" r="2.800" fill="#c868e0"/><g stroke="#d0d0d0" stroke-width=".8"><path d="M567 749h20M567 757h20M567 765h20M567 773h20M567 781h20"/></g></g>
<!-- Maps -->
<g transform="rotate(-6 625 765)"><rect x="605" y="746" width="39" height="39" fill="#f4f0e6" stroke="#fff" stroke-width="1.500"/><path d="M622 746h22v14c-10 1-18-4-22-14z" fill="#8fd47a"/><path d="M605 756l10-2 12 22-4 9h-8l2-12z" fill="#f6c84a"/><path d="M605 768h8l-2 17h-6z" fill="#f0b0c4"/><rect x="613" y="746" width="5" height="22" fill="#2a86e8"/><path d="M628 746c2 12 8 18 16 20" fill="none" stroke="#fff" stroke-width="3"/></g>
<circle cx="617" cy="769" r="5.700" fill="#1a78e0"/><path d="M617 765.500l2.500 6-2.500-1.500-2.500 1.500z" fill="#fff"/>
<circle cx="639.700" cy="772.200" r="11" fill="#eceff0" stroke="#c8cccf" stroke-width=".8"/><circle cx="639.700" cy="772.200" r="7" fill="#f8f8f8" stroke="#7aa6c0" stroke-width="1"/><text x="639.700" y="775" font-family="Liberation Sans" font-size="7" fill="#555" text-anchor="middle">3D</text><circle cx="639.700" cy="763.200" r="1.200" fill="#e83030"/>
<!-- Photos -->
<g><circle cx="682.700" cy="764.500" r="22" fill="#f6f6f6" stroke="#e0e0e0" stroke-width=".8"/><g transform="translate(682.700 764.500)" opacity=".88"><ellipse cx="0" cy="-10.500" rx="5.500" ry="8.500" fill="#f6a02a"/><ellipse cx="0" cy="-10.500" rx="5.500" ry="8.500" fill="#f2d430" transform="rotate(45)"/><ellipse cx="0" cy="-10.500" rx="5.500" ry="8.500" fill="#a6cc3c" transform="rotate(90)"/><ellipse cx="0" cy="-10.500" rx="5.500" ry="8.500" fill="#4cb866" transform="rotate(135)"/><ellipse cx="0" cy="-10.500" rx="5.500" ry="8.500" fill="#58a8e0" transform="rotate(180)"/><ellipse cx="0" cy="-10.500" rx="5.500" ry="8.500" fill="#7a78d0" transform="rotate(225)"/><ellipse cx="0" cy="-10.500" rx="5.500" ry="8.500" fill="#c070c0" transform="rotate(270)"/><ellipse cx="0" cy="-10.500" rx="5.500" ry="8.500" fill="#ec4a48" transform="rotate(315)"/></g></g>
<!-- Messages -->
<g><ellipse cx="737.700" cy="762.700" rx="22" ry="19" fill="url(#gMs)"/><path d="M725 776l-2.500 8 9-4z" fill="#1b8af2"/><ellipse cx="745.500" cy="773" rx="13.500" ry="11" fill="#f0f4f8"/><path d="M750 782l3 4-7-2z" fill="#f0f4f8"/><circle cx="738.500" cy="773" r="1.900" fill="#16499a"/><circle cx="745.500" cy="773" r="1.900" fill="#16499a"/><circle cx="752.500" cy="773" r="1.900" fill="#16499a"/></g>
<!-- FaceTime -->
<g><rect x="770.300" y="745.500" width="39.500" height="34.500" rx="4" fill="url(#gFt)"/><rect x="777" y="754" width="20" height="17" rx="2.500" fill="#f4f4f4"/><path d="M798 760l6-4v13l-6-4z" fill="#e8f8ec"/><circle cx="803.500" cy="772.600" r="11" fill="#f6f8f6"/><path d="M798.500 767.500c0 5 5 10 10 10l1.200-2.400-2.800-1.600-1.200 1c-1.700-.8-3.400-2.500-4.200-4.200l1-1.200-1.600-2.800z" fill="#28c254"/></g>
<!-- iTunes -->
<g><circle cx="847.700" cy="764.500" r="22.500" fill="url(#gIt)"/><circle cx="847.700" cy="764.500" r="20.200" fill="#fafafa"/><path d="M842.500 755.500l14-3.500v19.500a4 3.200 0 1 1-2.600-3v-11l-8.800 2.200v15.300a4 3.200 0 1 1-2.600-3z" fill="url(#gNt)"/></g>
<!-- App Store -->
<g><circle cx="903.500" cy="764.500" r="22" fill="#f4f8fc"/><circle cx="903.500" cy="764.500" r="20.300" fill="url(#gS)"/><g stroke="#fff" stroke-width="3" stroke-linecap="round" fill="none"><path d="M906 751.500l-11.500 21M901 751.500l11.500 21M891 768h25"/></g><circle cx="921" cy="747.200" r="9.500" fill="#f2404a"/><text x="921" y="751.500" font-family="Liberation Sans" font-size="12" fill="#fff" text-anchor="middle">1</text></g>
<!-- System Preferences -->
<g><rect x="936.700" y="743.800" width="43.300" height="41.200" rx="1.500" fill="url(#gSp)"/><circle cx="958.300" cy="764.200" r="18.500" fill="#3a3c3e"/><circle cx="958.300" cy="764.200" r="17" fill="none" stroke="#b8bcbe" stroke-width="3" stroke-dasharray="2 1.600"/><circle cx="958.300" cy="764.200" r="13.500" fill="#5a5d60"/><circle cx="958.300" cy="764.200" r="11" fill="#3a3c3e"/><g stroke="#a8acae" stroke-width="3"><path d="M958.300 764.200V752M958.300 764.200l10.500 6M958.300 764.200l-10.500 6"/></g><circle cx="958.300" cy="764.200" r="2.500" fill="#c8ccce"/></g>
<!-- WebStorm -->
<g><path d="M990 745l22-4.500 16 8 9.500 20-14 19.500-28-6z" fill="#12b8d8"/><path d="M1012 740.500l16.500 1.500 9 18-9.500 2z" fill="#f6e04a"/><path d="M1037.500 768l-14 20-4-12z" fill="#1a8ae0"/><path d="M1018 745l12 3 6 14-10 6z" fill="#30c8b0" opacity=".7"/><rect x="999.300" y="750.300" width="28.700" height="28.700" fill="#0c0c0c"/><text x="1013.600" y="765.500" font-family="Liberation Sans" font-weight="bold" font-size="14" fill="#fff" text-anchor="middle" letter-spacing="-.8">WS</text><rect x="1002.500" y="773" width="10.500" height="2" fill="#fff"/></g>
<!-- Xcode simulator -->
<g><path d="M1044.500 752l40-6.500 6 34-40 6.500z" fill="#3ea6f0"/><g stroke="#bfe0fa" stroke-width="1.200" fill="none"><path d="M1050 781l34-5.500M1052 768h30M1056 777l12-24 4 1-11 24M1066 753l14 22"/></g><g transform="rotate(14 1082 770)"><rect x="1074.500" y="756" width="15.500" height="29" rx="2.500" fill="#141416"/><rect x="1076" y="759.500" width="12.500" height="21" fill="#26262a"/></g></g>
<!-- sep -->
<rect x="1108" y="742" width="1" height="48.500" fill="#6e4a20" opacity=".8"/>
<!-- Folder -->
<g><path d="M1136 739.500h12l11 9v8h-23z" fill="#f4f4f4"/><path d="M1147 740v9h10z" fill="#c8c8c8"/><rect x="1146.500" y="741" width="3.500" height="10" fill="#555"/><path d="M1127 750a2 2 0 0 1 2-2h12.500l3 3.500H1168a2 2 0 0 1 2 2v28a2 2 0 0 1-2 2h-39a2 2 0 0 1-2-2z" fill="url(#gFo)"/><path d="M1127 782h43" stroke="#4aa6dc" stroke-width="1.200"/></g>
<!-- Trash -->
<g><path d="M1186 746c0-7 35-7 35 0l-4.500 37c-.5 5.500-25.500 5.500-26 0z" fill="url(#gTr)" opacity=".82"/><ellipse cx="1203.500" cy="746" rx="17.500" ry="5" fill="#d8d8d8"/><path d="M1190 745l6-4 5 3 5-4 6 2 5 3-6 3-8-1-7 1z" fill="#f4f4f4"/><path d="M1196 744l4 2-3 1zM1208 742l4 3-4 1z" fill="#3a3a4a"/><path d="M1200 743l4-1 1 3z" fill="#3aa8d0"/><path d="M1212 744l3 1-2 2z" fill="#d84a3a"/></g>
<!-- dots -->
<g fill="#3a1208"><circle cx="76" cy="796" r="1.700"/><circle cx="186" cy="796" r="1.700"/></g><g fill="#5a1408"><circle cx="351.800" cy="796" r="1.700"/><circle cx="1012.700" cy="796" r="1.700"/><circle cx="1067.700" cy="796" r="1.700"/></g>
</svg>
</div></body></html>
